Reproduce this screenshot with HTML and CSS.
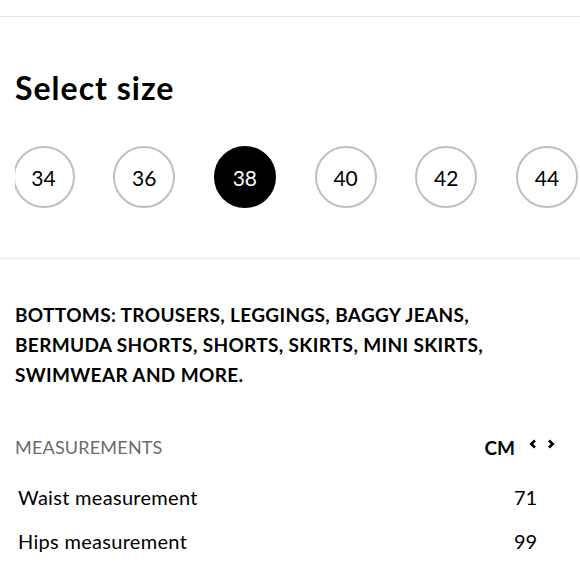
FILE: index.html
```html
<!DOCTYPE html>
<html>
<head>
<meta charset="utf-8">
<link rel="stylesheet" href="styles.css">
</head>
<body>
<div class="topline"></div>
<section class="size-section">
  <h1 class="title">Select size</h1>
  <div class="sizes-viewport">
    <div class="sizes">
      <div class="size">34</div>
      <div class="size">36</div>
      <div class="size active">38</div>
      <div class="size">40</div>
      <div class="size">42</div>
      <div class="size">44</div>
    </div>
  </div>
</section>
<div class="separator"></div>
<section class="guide">
  <p class="category">BOTTOMS: TROUSERS, LEGGINGS, BAGGY JEANS,<br>BERMUDA SHORTS, SHORTS, SKIRTS, MINI SKIRTS,<br>SWIMWEAR AND MORE.</p>
  <div class="meas-head">
    <span class="meas-label">MEASUREMENTS</span>
    <span class="unit"><span class="cm">CM</span>
      <svg class="chev" width="8" height="10" viewBox="0 0 8 10"><path d="M6 1.5 L2.3 5 L6 8.5" fill="none" stroke="#000" stroke-width="2.6"/></svg>
      <svg class="chev" width="8" height="10" viewBox="0 0 8 10"><path d="M2 1.5 L5.7 5 L2 8.5" fill="none" stroke="#000" stroke-width="2.6"/></svg>
    </span>
  </div>
  <div class="row"><span>Waist measurement</span><span class="val">71</span></div>
  <div class="row"><span>Hips measurement</span><span class="val">99</span></div>
</section>
</body>
</html>
```

FILE: styles.css
```css
html, body { margin: 0; padding: 0; background: #fff; }
body { font-family: Lato, "Open Sans", sans-serif; color: #000; width: 580px; overflow: hidden; }
.topline { height: 1px; background: #e4e4e4; margin-top: 16px; }
.size-section { padding: 52px 0 0 15px; height: 223px; box-sizing: border-box; }
.title { margin: 0; font-size: 32px; font-weight: 700; line-height: 38px; letter-spacing: 1px; }
.sizes-viewport { overflow: hidden; margin-top: 39px; }
.sizes { display: flex; gap: 38.7px; margin-left: -2.5px; }
.size { flex: 0 0 62px; height: 62px; border: 2px solid #bfbfbf; border-radius: 50%; box-sizing: border-box; display: flex; align-items: center; justify-content: center; font-size: 21px; font-weight: 400; }
.size.active { background: #000; border-color: #000; color: #fff; }
.separator { height: 3px; background: #f3f3f3; margin-top: 17px; }
.guide { padding: 40px 0 0 15px; }
.category { margin: 0; font-size: 19px; font-weight: 700; line-height: 30px; letter-spacing: 0.35px; }
.meas-head { display: flex; justify-content: space-between; align-items: center; margin-top: 45px; padding-right: 25px; height: 24px; }
.meas-label { font-size: 18px; color: #6b6b6b; letter-spacing: 0.2px; }
.unit { font-size: 19px; font-weight: 700; display: flex; align-items: center; }
.unit .cm { margin-right: 14px; }
.unit .chev { margin-top: -6px; }
.unit .chev + .chev { margin-left: 10px; }
.row { display: flex; justify-content: space-between; align-items: center; font-size: 20px; letter-spacing: 0.3px; height: 44px; padding-left: 3px; padding-right: 44px; }
.meas-head + .row { margin-top: 16px; }
.val { width: 22px; text-align: center; letter-spacing: 0; }
```
